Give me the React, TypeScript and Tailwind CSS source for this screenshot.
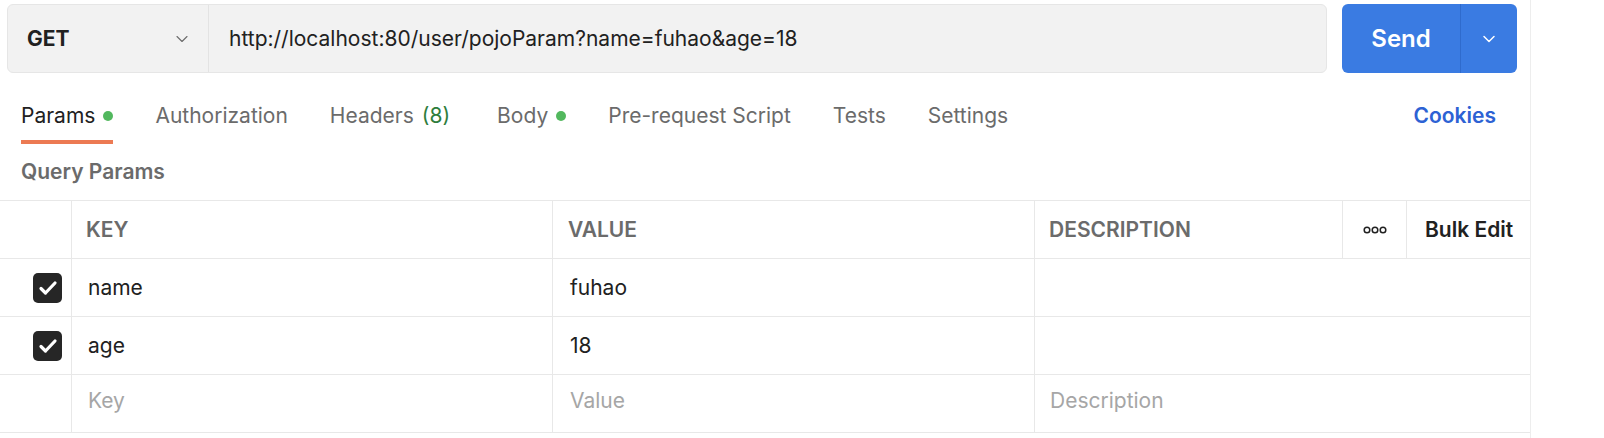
import { ChevronDown } from "lucide-react";

const tabs = [
  { label: "Params", dot: true, active: true },
  { label: "Authorization" },
  { label: "Headers", count: "(8)" },
  { label: "Body", dot: true },
  { label: "Pre-request Script" },
  { label: "Tests" },
  { label: "Settings" },
];

const rows = [
  { key: "name", value: "fuhao" },
  { key: "age", value: "18" },
];

function Check() {
  return (
    <div className="flex h-[30px] w-[29px] items-center justify-center rounded-[5px] bg-[#262626]">
      <svg width="22" height="22" viewBox="0 0 22 22" fill="none">
        <path d="M4 11.5l4.5 4.5 9.5-10" stroke="white" strokeWidth="3.2" strokeLinecap="round" strokeLinejoin="round" />
      </svg>
    </div>
  );
}

function Dots() {
  return (
    <svg width="24" height="8" viewBox="0 0 24 8" fill="none">
      <circle cx="4" cy="4" r="2.8" stroke="#212121" strokeWidth="1.5" />
      <circle cx="12" cy="4" r="2.8" stroke="#212121" strokeWidth="1.5" />
      <circle cx="20" cy="4" r="2.8" stroke="#212121" strokeWidth="1.5" />
    </svg>
  );
}

export default function App() {
  return (
    <div className="flex h-[438px] w-[1604px] overflow-hidden bg-white font-['Inter',sans-serif] text-[#212121]">
      <div className="w-[1531px] shrink-0 border-r border-[#ededed]">
        {/* request bar */}
        <div className="flex gap-[15px] pl-[7px] pr-[13px] pt-[4px]">
          <div className="flex h-[69px] flex-1 rounded-[6px] border border-[#e6e6e6] bg-[#f2f2f2]">
            <div className="flex w-[201px] items-center justify-between border-r border-[#e3e3e3] pl-[19px] pr-[16px]">
              <span className="text-[21px] font-bold">GET</span>
              <ChevronDown size={20} strokeWidth={1.3} className="text-[#6b6b6b]" />
            </div>
            <div className="flex items-center pl-[20px] text-[21px]">
              http://localhost:80/user/pojoParam?name=fuhao&amp;age=18
            </div>
          </div>
          <div className="flex h-[69px] w-[175px] overflow-hidden rounded-[6px] bg-[#3a7be2] text-white">
            <div className="flex w-[118px] items-center justify-center text-[24px] font-semibold">Send</div>
            <div className="flex flex-1 items-center justify-center border-l border-[#2f6bcd]">
              <ChevronDown size={20} strokeWidth={1.8} />
            </div>
          </div>
        </div>

        {/* tabs */}
        <div className="mt-[29px] flex items-start pl-[21px] pr-[34px]">
          <div className="flex gap-[42px]">
            {tabs.map((t) => (
              <div key={t.label} className={"flex flex-col " + (t.count ? "mr-[5px]" : "")}>
                <div
                  className={
                    "flex h-[28px] items-center gap-[8px] text-[21px] " +
                    (t.active ? "text-[#212121]" : "text-[#6b6b6b]")
                  }
                >
                  <span>
                    {t.label}
                    {t.count && <span className="ml-[8px] text-[#2e7d3c]">{t.count}</span>}
                  </span>
                  {t.dot && <span className="h-[10px] w-[10px] rounded-full bg-[#52b85e]" />}
                </div>
                <div className={"mt-[10px] h-[4px] " + (t.active ? "bg-[#ec7a53]" : "")} />
              </div>
            ))}
          </div>
          <div className="ml-auto flex h-[28px] items-center text-[21px] font-semibold text-[#2d62d4]">Cookies</div>
        </div>

        <div className="mt-[14px] flex h-[28px] items-center pl-[21px] text-[21px] font-semibold text-[#6b6b6b]">
          Query Params
        </div>

        {/* table */}
        <div className="mt-[14px] border-t border-[#e8e8e8]">
          <div className="flex h-[58px] border-b border-[#e8e8e8] text-[21px] font-semibold">
            <div className="w-[72px] border-r border-[#e8e8e8]" />
            <div className="flex w-[481px] items-center border-r border-[#e8e8e8] pl-[14px] text-[#6b6b6b]">KEY</div>
            <div className="flex w-[482px] items-center border-r border-[#e8e8e8] pl-[15px] text-[#6b6b6b]">VALUE</div>
            <div className="flex w-[308px] items-center border-r border-[#e8e8e8] pl-[14px] text-[#6b6b6b]">DESCRIPTION</div>
            <div className="flex w-[64px] items-center justify-center border-r border-[#e8e8e8]">
              <Dots />
            </div>
            <div className="flex flex-1 items-center pl-[18px] text-[#212121]">Bulk Edit</div>
          </div>
          {rows.map((r) => (
            <div key={r.key} className="flex h-[58px] border-b border-[#e8e8e8] text-[21px]">
              <div className="flex w-[72px] items-center border-r border-[#e8e8e8] pl-[33px]">
                <Check />
              </div>
              <div className="flex w-[481px] items-center border-r border-[#e8e8e8] pl-[16px]">{r.key}</div>
              <div className="flex w-[482px] items-center border-r border-[#e8e8e8] pl-[17px]">{r.value}</div>
              <div className="flex-1" />
            </div>
          ))}
          <div className="flex h-[58px] border-b border-[#e8e8e8] text-[21px] text-[#a6a6a6]">
            <div className="w-[72px] border-r border-[#e8e8e8]" />
            <div className="flex w-[481px] items-center border-r border-[#e8e8e8] pb-[5px] pl-[16px]">Key</div>
            <div className="flex w-[482px] items-center border-r border-[#e8e8e8] pb-[5px] pl-[17px]">Value</div>
            <div className="flex flex-1 items-center pb-[5px] pl-[15px]">Description</div>
          </div>
        </div>
      </div>
    </div>
  );
}
